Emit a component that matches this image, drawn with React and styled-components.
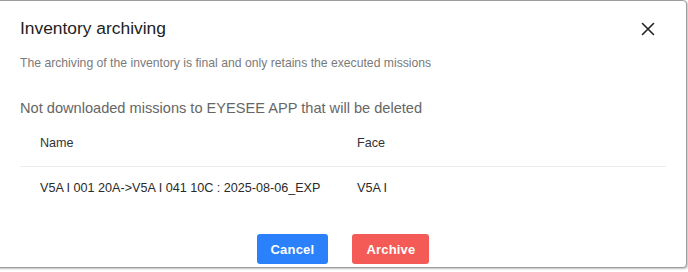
import React from 'react'
import styled, { createGlobalStyle } from 'styled-components'

const GlobalStyle = createGlobalStyle`
  body {
    margin: 0;
    background: #ffffff;
    font-family: "Liberation Sans", Arial, Helvetica, sans-serif;
  }
`

const Page = styled.div`
  width: 688px;
  height: 272px;
  overflow: hidden;
`

const Modal = styled.div`
  margin-left: -3px;
  width: 690px;
  height: 268px;
  box-sizing: border-box;
  background: #fff;
  border: 1px solid #9c9c9c;
  border-radius: 0 4px 4px 0;
  box-shadow: 1px 1px 2px rgba(0, 0, 0, 0.25);
  padding: 0 20px 0 22px;
  display: flex;
  flex-direction: column;
`

const Header = styled.div`
  padding-top: 16px;
  display: flex;
  align-items: center;
  justify-content: space-between;
`

const Title = styled.h2`
  margin: 0;
  font-size: 17.4px;
  line-height: 22px;
  font-weight: 400;
  color: #222;
`

const CloseButton = styled.button`
  border: none;
  background: none;
  padding: 0;
  width: 14px;
  height: 14px;
  margin-right: 11px;
  margin-top: 1px;
  display: flex;
  cursor: pointer;
`

const Subtitle = styled.p`
  margin: 16px 0 0;
  font-size: 12.2px;
  line-height: 16px;
  color: #7a7a7a;
`

const Section = styled.h3`
  margin: 28px 0 0;
  font-size: 14.6px;
  line-height: 18px;
  font-weight: 400;
  color: #666;
`

const Table = styled.div`
  display: grid;
  grid-template-columns: 317px 1fr;
`

const Cell = styled.div`
  font-size: 12.6px;
  line-height: 16px;
  white-space: nowrap;
  color: ${p => (p.$head ? '#333' : '#2a2a2a')};
  padding: ${p => (p.$head ? '18px 20px 15px' : '13px 20px 13px')};
  border-bottom: ${p => (p.$head ? '1px solid #ececec' : 'none')};
`

const Footer = styled.div`
  margin-top: 25px;
  display: flex;
  justify-content: center;
  gap: 24px;
`

const Button = styled.button`
  height: 30px;
  padding: 0 14px;
  border: none;
  border-radius: 3px;
  background: ${p => (p.$danger ? '#f45b56' : '#2a81fb')};
  color: #fff;
  font-family: inherit;
  font-size: 13px;
  font-weight: 700;
  letter-spacing: 0.2px;
  cursor: pointer;
`

const Behind = styled.div`
  margin-top: 1px;
  display: flex;
  gap: 190px;
  padding-left: 242px;
  font-size: 13px;
  line-height: 16px;
  color: #222;
  white-space: nowrap;
`

function App() {
  return (
    <Page>
      <GlobalStyle />
      <Modal>
        <Header>
          <Title>Inventory archiving</Title>
          <CloseButton aria-label="close">
            <svg width="14" height="14" viewBox="0 0 14 14">
              <path d="M1.5 1.5 L12.5 12.5 M12.5 1.5 L1.5 12.5" stroke="#222" strokeWidth="1.6" strokeLinecap="round" />
            </svg>
          </CloseButton>
        </Header>
        <Subtitle>The archiving of the inventory is final and only retains the executed missions</Subtitle>
        <Section>Not downloaded missions to EYESEE APP that will be deleted</Section>
        <Table>
          <Cell $head>Name</Cell>
          <Cell $head>Face</Cell>
          <Cell>V5A I 001 20A-&gt;V5A I 041 10C : 2025-08-06_EXP</Cell>
          <Cell>V5A I</Cell>
        </Table>
        <Footer>
          <Button>Cancel</Button>
          <Button $danger>Archive</Button>
        </Footer>
      </Modal>
      <Behind>
        <span>All location with stock</span>
        <span>All valid location with</span>
      </Behind>
    </Page>
  )
}

export default App
